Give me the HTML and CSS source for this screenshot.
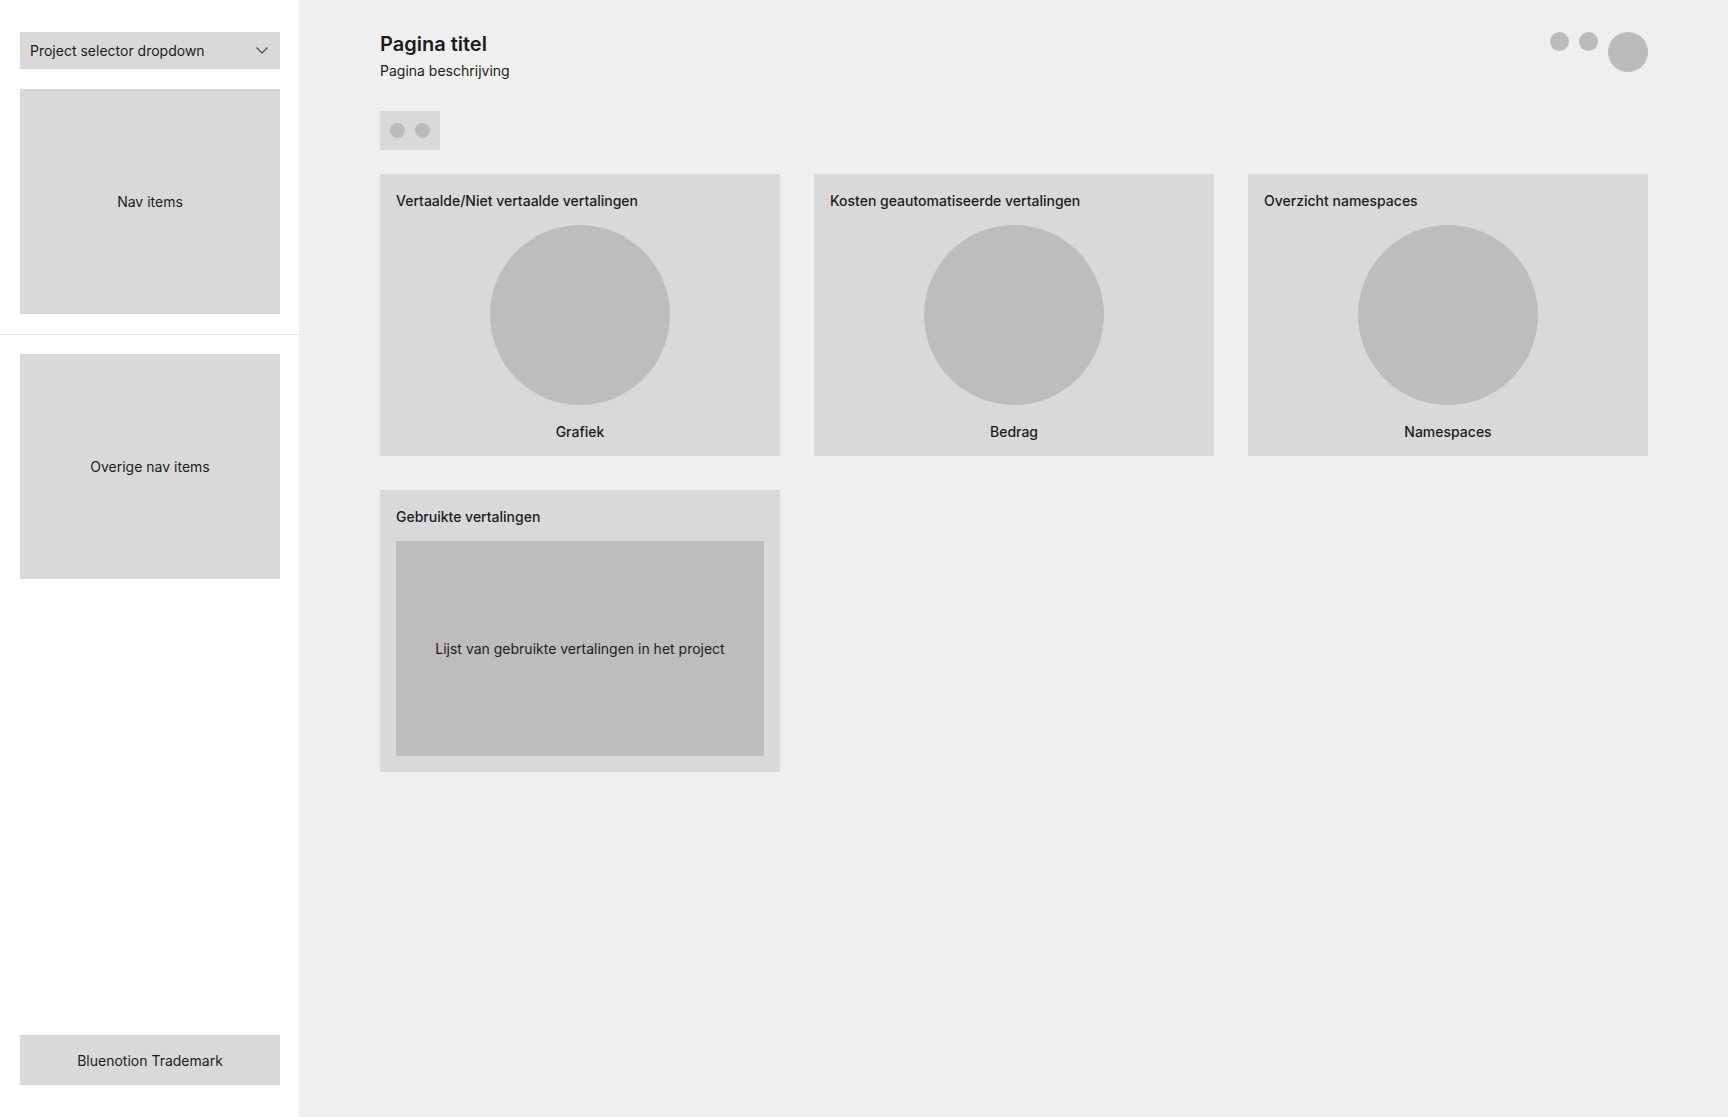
FILE: index.html
```html
<!DOCTYPE html>
<html lang="nl">
<head>
    <meta charset="UTF-8">
    <meta name="viewport" content="width=device-width, initial-scale=1.0">
    <title>Dashboard</title>
    <link rel="stylesheet" href="styles.css">
</head>
<body>
    <div class="layout">
        <aside class="sidebar">
            <div class="sidebar-top">
                <div class="project-select">
                    <span>Project selector dropdown</span>
                    <svg width="12" height="7" viewBox="0 0 12 7" fill="none">
                        <path d="M0.5 0.5L6 6L11.5 0.5" stroke="#444" stroke-width="1.2"/>
                    </svg>
                </div>
                <div class="nav-block">Nav items</div>
            </div>
            <div class="sidebar-bottom">
                <div class="nav-block">Overige nav items</div>
            </div>
            <div class="trademark">Bluenotion Trademark</div>
        </aside>

        <main class="content">
            <div class="page-header">
                <div class="page-text">
                    <h1>Pagina titel</h1>
                    <p>Pagina beschrijving</p>
                </div>
                <div class="header-actions">
                    <span class="dot small"></span>
                    <span class="dot small"></span>
                    <span class="dot avatar"></span>
                </div>
            </div>

            <div class="toggle-group">
                <span class="dot tiny"></span>
                <span class="dot tiny"></span>
            </div>

            <div class="card-grid">
                <div class="card">
                    <div class="card-title">Vertaalde/Niet vertaalde vertalingen</div>
                    <div class="chart"></div>
                    <div class="card-label">Grafiek</div>
                </div>
                <div class="card">
                    <div class="card-title">Kosten geautomatiseerde vertalingen</div>
                    <div class="chart"></div>
                    <div class="card-label">Bedrag</div>
                </div>
                <div class="card">
                    <div class="card-title">Overzicht namespaces</div>
                    <div class="chart"></div>
                    <div class="card-label">Namespaces</div>
                </div>
                <div class="card">
                    <div class="card-title">Gebruikte vertalingen</div>
                    <div class="list-box">Lijst van gebruikte vertalingen in het project</div>
                </div>
            </div>
        </main>
    </div>
</body>
</html>
```

FILE: styles.css
```css
* {
    box-sizing: border-box;
}
body {
    margin: 0;
    font-family: Inter, "Noto Sans", sans-serif;
    font-size: 14px;
    color: #1c1c1c;
    background-color: #efefef;
}
.layout {
    display: flex;
    height: 100vh;
}
/* Sidebar */
.sidebar {
    width: 299px;
    flex-shrink: 0;
    background: white;
    display: flex;
    flex-direction: column;
    padding-bottom: 32px;
}
.sidebar-top {
    padding: 32px 19px 20px 20px;
    display: flex;
    flex-direction: column;
    gap: 20px;
    border-bottom: 1px solid #e6e6e6;
}
.sidebar-bottom {
    padding: 19px 19px 0 20px;
    flex: 1;
}
.project-select {
    height: 37px;
    background: #d9d9d9;
    display: flex;
    align-items: center;
    justify-content: space-between;
    padding: 0 12px 0 10px;
}
.nav-block {
    height: 225px;
    background: #d9d9d9;
    display: flex;
    align-items: center;
    justify-content: center;
}
.trademark {
    margin: 0 19px 0 20px;
    height: 50px;
    background: #d9d9d9;
    display: flex;
    align-items: center;
    justify-content: center;
}
/* Main */
.content {
    flex: 1;
    padding: 32px 80px 0 81px;
}
.page-header {
    display: flex;
    justify-content: space-between;
    align-items: flex-start;
}
.page-text h1 {
    margin: 0;
    font-size: 20px;
    line-height: 24px;
    font-weight: 600;
}
.page-text p {
    margin: 5px 0 0;
    line-height: 20px;
}
.header-actions {
    display: flex;
    gap: 10px;
    align-items: flex-start;
}
.dot {
    display: block;
    border-radius: 50%;
    background: #bbbbbb;
}
.dot.small {
    width: 19px;
    height: 19px;
}
.dot.avatar {
    width: 40px;
    height: 40px;
}
.dot.tiny {
    width: 15px;
    height: 15px;
}
.toggle-group {
    margin-top: 30px;
    width: 60px;
    height: 39px;
    background: #d9d9d9;
    display: flex;
    align-items: center;
    gap: 10px;
    padding: 0 10px;
}
.card-grid {
    margin-top: 24px;
    display: grid;
    grid-template-columns: repeat(3, 400px);
    grid-auto-rows: 282px;
    gap: 34px;
}
.card {
    background: #d9d9d9;
    padding: 16px;
    display: flex;
    flex-direction: column;
    gap: 15px;
}
.card-title {
    line-height: 21px;
    font-weight: 500;
}
.chart {
    width: 180px;
    height: 180px;
    margin-top: -1px;
    border-radius: 50%;
    background: #bdbdbd;
    align-self: center;
    flex-shrink: 0;
}
.card-label {
    margin-top: 1px;
    text-align: center;
    line-height: 21px;
    font-weight: 500;
}
.list-box {
    flex: 1;
    margin-top: -1px;
    background: #bdbdbd;
    display: flex;
    align-items: center;
    justify-content: center;
}
```
